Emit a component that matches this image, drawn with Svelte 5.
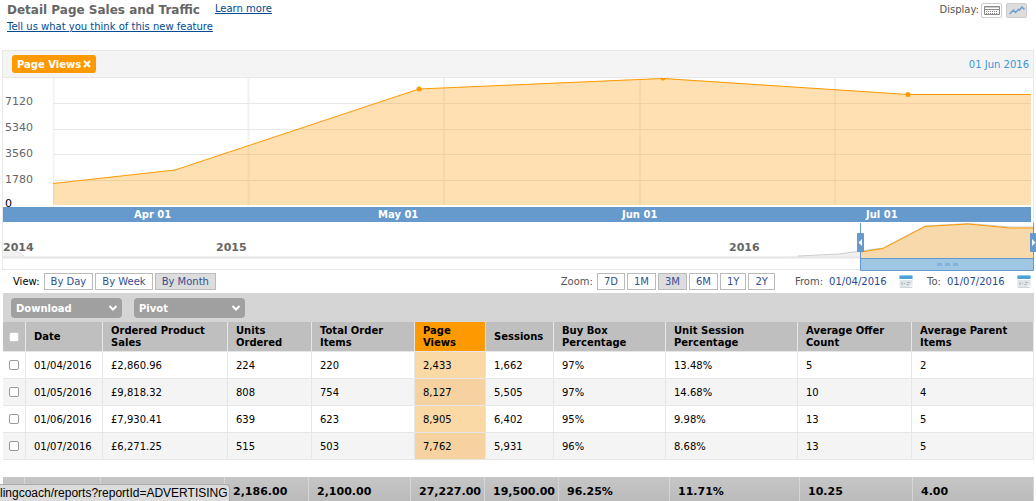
<script>
  const axis = [7120, 5340, 3560, 1780];
  const months = ['Apr 01', 'May 01', 'Jun 01', 'Jul 01'];
  const years = [2014, 2015, 2016];
  const views = ['By Day', 'By Week', 'By Month'];
  const zooms = ['7D', '1M', '3M', '6M', '1Y', '2Y'];

  let view = $state('By Month');
  let zoom = $state('3M');

  const columns = [
    { title: 'Date', width: 77 },
    { title: 'Ordered Product Sales', width: 125 },
    { title: 'Units Ordered', width: 84 },
    { title: 'Total Order Items', width: 103 },
    { title: 'Page Views', width: 71, active: true },
    { title: 'Sessions', width: 68 },
    { title: 'Buy Box Percentage', width: 112 },
    { title: 'Unit Session Percentage', width: 132 },
    { title: 'Average Offer Count', width: 114 },
    { title: 'Average Parent Items', width: 122 }
  ];

  const rows = [
    ['01/04/2016', '£2,860.96', '224', '220', '2,433', '1,662', '97%', '13.48%', '5', '2'],
    ['01/05/2016', '£9,818.32', '808', '754', '8,127', '5,505', '97%', '14.68%', '10', '4'],
    ['01/06/2016', '£7,930.41', '639', '623', '8,905', '6,402', '95%', '9.98%', '13', '5'],
    ['01/07/2016', '£6,271.25', '515', '503', '7,762', '5,931', '96%', '8.68%', '13', '5']
  ];

  const totals = [
    { value: '', width: 22 },
    { value: '', width: 76 },
    { value: '', width: 124 },
    { value: '2,186.00', width: 84 },
    { value: '2,100.00', width: 102 },
    { value: '27,227.00', width: 74 },
    { value: '19,500.00', width: 74 },
    { value: '96.25%', width: 111 },
    { value: '11.71%', width: 130 },
    { value: '10.25', width: 113 },
    { value: '4.00', width: 121 }
  ];
</script>

{#snippet calendar()}
  <svg width="14" height="15" viewBox="0 0 14 15" aria-hidden="true">
    <rect x="0.5" y="1" width="13" height="13" rx="1" fill="#e0e5e8" />
    <path d="M0.5 5V2a1 1 0 0 1 1-1h11a1 1 0 0 1 1 1v3z" fill="#4aa3d4" />
    <path d="M1 1.5h12" stroke="#8cc6e8" />
    <path d="M1 5.5h12" stroke="#fff" />
    <path d="M3 8v3M5 9.5h1M8 8.500h3M7.500 10.500h2" stroke="#a9b4bb" />
    <path d="M9 14l4.500-4v4z" fill="#f7f9fa" />
    <path d="M1 13.500h12" stroke="#cfd5d9" />
  </svg>
{/snippet}

{#snippet dropdown(name)}
  <label class="dropdown">
    <select aria-label={name}><option>{name}</option></select>
    <svg width="10" height="8" viewBox="0 0 10 8" aria-hidden="true">
      <path d="M1.500 2L5 5.500L8.500 2" fill="none" stroke="#fff" stroke-width="2" />
    </svg>
  </label>
{/snippet}

<div class="page">
  <header>
    <div>
      <div class="title">
        <h1>Detail Page Sales and Traffic</h1>
        <a href="#learn">Learn more</a>
      </div>
      <a href="#feedback">Tell us what you think of this new feature</a>
    </div>
    <div class="display">
      <span>Display:</span>
      <button aria-label="Table">
        <svg width="16" height="10" viewBox="0 0 16 10">
          <path d="M0.500 0.500h15v8h-15z" fill="#fff" stroke="#888" />
          <path d="M1 1.500h14" stroke="#ccc" />
          <path d="M1 3.500h14" stroke="#888" />
          <path d="M2 5.500h12M2 7.500h12" stroke="#888" stroke-dasharray="1 1" />
        </svg>
      </button>
      <button class="on" aria-label="Chart">
        <svg width="16" height="10" viewBox="0 0 16 10">
          <path d="M0.500 8L4.500 4L6.500 6.500L9.500 3.500L10.500 4L13 1L15.500 3.500" fill="none" stroke="#6f9fd0" stroke-width="1.500" />
        </svg>
      </button>
    </div>
  </header>

  <section class="panel">
    <div class="legend">
      <button class="chip">Page Views
        <svg width="8" height="8" viewBox="0 0 8 8" aria-hidden="true">
          <path d="M1 1l6 6M7 1l-6 6" stroke="#fff" stroke-width="2" />
        </svg>
      </button>
      <span class="hovered">01 Jun 2016</span>
    </div>

    <div class="chart">
      <div class="axis">
        {#each axis as tick}
          <span>{tick}</span>
        {/each}
        <span class="zero">0</span>
      </div>
      <svg class="plot" viewBox="0 0 978 127" preserveAspectRatio="none">
        <path d="M0.500 0v127M195.500 0v127M391 0v127M587 0v127M782 0v127" stroke="#f2f2f2" stroke-width="2" />
        <path d="M0 25.500h978M0 51.500h978M0 76.500h978M0 102.500h978" stroke="#e8e8e8" />
        <path d="M0 105.500L122 92L366 11L610 0L855 16.500H978V127H0z" fill="#f90" fill-opacity="0.3" />
        <path d="M0 105.500L122 92L366 11L610 0.500L855 16.500H978" fill="none" stroke="#f90" />
        <circle cx="366" cy="11" r="2.500" fill="#f90" />
        <circle cx="610" cy="0" r="2.500" fill="#f90" />
        <circle cx="855" cy="16.500" r="2.500" fill="#f90" />
      </svg>
    </div>

    <div class="months">
      {#each months as month}
        <span>{month}</span>
      {/each}
    </div>

    <div class="overview">
      <svg viewBox="0 0 1030 48" preserveAspectRatio="none">
        <path d="M0 28L14 29L22 35H0z" fill="#f2f2f2" />
        <path d="M14 29L21 34" stroke="#ddd" />
        <path d="M780 35L836 32L858 29V35z" fill="#f0f0f0" />
        <path d="M0 35.500h858" stroke="#e6e6e6" stroke-width="2" />
        <path d="M795 34L836 32L858 29L880 26L922 4L965 1.500L1007 5H1030" fill="none" stroke="#ccc" />
        <path d="M858 30L880 26.500L922 4.500L965 2L1007 6H1031V36H858z" fill="#f8d9ab" />
        <path d="M858 30L880 26.500L922 4.500L965 2L1007 6H1031" fill="none" stroke="#f90" />
        <path d="M857.500 36.500h173v12h-173z" fill="#9fc6e3" stroke="#69c" />
        <path d="M934 42.500h5M942 42.500h5M950 42.500h5" stroke="#7fb2dc" stroke-width="3" />
        <path d="M857.500 1v36M1030.500 1v36" stroke="#69c" />
        <rect x="854" y="11" width="7" height="19" rx="1" fill="#69c" />
        <rect x="1027" y="11" width="7" height="19" rx="1" fill="#69c" />
        <path d="M859 17v7l-3.500-3.500zM1029 17v7l3.500-3.500z" fill="#fff" />
      </svg>
      <div class="years">
        {#each years as year}
          <span>{year}</span>
        {/each}
      </div>
    </div>
  </section>

  <div class="controls">
    <div class="group">
      <span class="dark">View:</span>
      {#each views as v}
        <button class:on={view === v} onclick={() => (view = v)}>{v}</button>
      {/each}
    </div>
    <div class="group right">
      <span>Zoom:</span>
      {#each zooms as z}
        <button class:on={zoom === z} onclick={() => (zoom = z)}>{z}</button>
      {/each}
    </div>
    <div class="dates">
      <label>From: <input type="text" value="01/04/2016" />{@render calendar()}</label>
      <label>To: <input type="text" value="01/07/2016" />{@render calendar()}</label>
    </div>
  </div>

  <div class="toolbar">
    {@render dropdown('Download')}
    {@render dropdown('Pivot')}
  </div>

  <table class="data">
    <colgroup>
      <col style:width="{(23 / 1031) * 100}%" />
      {#each columns as column}
        <col style:width="{(column.width / 1031) * 100}%" />
      {/each}
    </colgroup>
    <thead>
      <tr>
        <th class="check"><input type="checkbox" aria-label="Select all" /></th>
        {#each columns as column}
          <th class:active={column.active}>{column.title}</th>
        {/each}
      </tr>
    </thead>
    <tbody>
      {#each rows as row}
        <tr>
          <td class="check"><input type="checkbox" aria-label={row[0]} /></td>
          {#each row as cell, i}
            <td class:active={columns[i].active}>{cell}</td>
          {/each}
        </tr>
      {/each}
    </tbody>
  </table>

  <table class="totals">
    <colgroup>
      {#each totals as total}
        <col style:width="{(total.width / 1031) * 100}%" />
      {/each}
    </colgroup>
    <tbody>
      <tr>
        {#each totals as total}
          <td>{total.value}</td>
        {/each}
      </tr>
    </tbody>
  </table>

  <div class="status">lingcoach/reports?reportId=ADVERTISING</div>
</div>

<style>
  :global(body) {
    margin: 0;
    background: #fff;
  }

  .page {
    position: relative;
    font-family: Verdana, 'DejaVu Sans', sans-serif;
    font-size: 10px;
    color: #000;
  }

  button,
  input,
  select {
    font: inherit;
    margin: 0;
  }

  svg {
    display: block;
  }

  header {
    display: flex;
    justify-content: space-between;
    height: 50px;
    padding: 0 9px 0 7px;
    box-sizing: border-box;
  }

  header a {
    color: #004b91;
    line-height: 18px;
  }

  .title {
    display: flex;
    gap: 15px;
    height: 18px;
  }

  h1 {
    margin: 0;
    font-size: 12px;
    line-height: 20px;
    color: #666;
  }

  .display {
    display: flex;
    gap: 4px;
    padding-top: 3px;
    height: 15px;
    line-height: 14px;
    color: #555;
  }

  .display span {
    margin-right: -2px;
  }

  .display button {
    display: grid;
    place-items: center;
    width: 21px;
    height: 15px;
    padding: 0;
    background: #fff;
    border: 1px solid #ccc;
    border-radius: 2px;
  }

  .display .on {
    background: #ddd;
  }

  .panel {
    margin: 0 2px;
    border: 1px solid #e8e8e8;
  }

  .legend {
    display: flex;
    justify-content: space-between;
    align-items: center;
    height: 26px;
    padding: 0 4px 0 9px;
    background: #f4f4f4;
    border-bottom: 1px solid #e8e8e8;
  }

  .chip {
    display: flex;
    align-items: center;
    gap: 2px;
    height: 18px;
    padding: 0 5px;
    background: #f90;
    border: 0;
    border-radius: 3px;
    color: #fff;
    font-weight: bold;
  }

  .hovered {
    color: #3c96d4;
  }

  .chart {
    display: flex;
    height: 129px;
    margin-right: 2px;
  }

  .axis {
    display: flex;
    flex-direction: column;
    width: 48px;
    padding: 11px 0 0 2px;
    font-size: 11px;
    line-height: 26px;
    color: #666;
  }

  .axis .zero {
    line-height: 22px;
    color: #000;
  }

  .plot {
    flex: 1;
    min-width: 0;
    height: 127px;
  }

  .months {
    display: grid;
    grid-template-columns: repeat(3, 244fr) 165fr;
    margin-right: 2px;
    padding-left: 131px;
    background: #69c;
    color: #fff;
    font-weight: bold;
    line-height: 15px;
  }

  .overview {
    display: grid;
    height: 47px;
  }

  .overview > * {
    grid-area: 1 / 1;
  }

  .overview svg {
    width: 100%;
    height: 48px;
    overflow: visible;
  }

  .years {
    display: grid;
    grid-template-columns: 213fr 513fr 304fr;
    padding-top: 18px;
    font-size: 11px;
    font-weight: bold;
    line-height: 16px;
    color: #666;
  }

  .controls {
    display: flex;
    align-items: center;
    height: 23px;
    padding: 0 5px 0 13px;
    color: #555;
  }

  .group {
    display: flex;
    align-items: center;
    gap: 2px;
  }

  .group .dark {
    color: #000;
  }

  .group span {
    margin-right: 2px;
  }

  .group button {
    height: 17px;
    padding: 0 6px;
    background: #fff;
    border: 1px solid #bbb;
    color: #34508f;
    line-height: 15px;
  }

  .group .on {
    background: #ddd;
  }

  .right {
    margin-left: auto;
  }

  .dates {
    display: flex;
    gap: 14px;
    margin-left: 20px;
  }

  .dates label {
    display: flex;
    align-items: center;
    gap: 6px;
  }

  .dates input {
    width: 64px;
    padding: 0;
    border: 0;
    background: none;
    color: #1f4a94;
  }

  .toolbar {
    display: flex;
    gap: 12px;
    margin: 0 2px 0 3px;
    padding: 5px 8px 4px;
    background: #d5d5d5;
  }

  .dropdown {
    display: grid;
    align-items: center;
    width: 111px;
    height: 20px;
    background: #a0a0a0;
    border-radius: 4px;
  }

  .dropdown > * {
    grid-area: 1 / 1;
  }

  .dropdown select {
    appearance: none;
    width: 100%;
    height: 20px;
    padding: 0 5px;
    background: none;
    border: 0;
    color: #fff;
    font-weight: bold;
  }

  .dropdown svg {
    justify-self: end;
    margin-right: 4px;
    pointer-events: none;
  }

  table {
    table-layout: fixed;
    border-collapse: separate;
    border-spacing: 0;
  }

  .data {
    width: calc(100% - 5px);
    margin: 0 2px 0 3px;
  }

  th,
  td {
    box-sizing: border-box;
    padding: 0 8px;
    border-right: 1px solid #e6e6e6;
    text-align: left;
  }

  th {
    height: 30px;
    background: #bfbfbf;
    border-bottom: 1px solid #e6e6e6;
    line-height: 12px;
  }

  th.active {
    background: #f90;
  }

  .data td {
    height: 27px;
    border-bottom: 1px solid #e6e6e6;
  }

  tbody tr:nth-child(even) {
    background: #f4f4f4;
  }

  td.active {
    background: #fbd9a5;
  }

  tr:nth-child(even) td.active {
    background: #f5d29f;
  }

  .data .check {
    padding: 0 0 0 6px;
  }

  .check input {
    display: block;
    appearance: none;
    width: 10px;
    height: 10px;
    background: #fff;
    border: 1px solid #999;
    border-radius: 2px;
  }

  th.check input {
    border-color: #ccc;
  }

  .totals {
    width: calc(100% - 5px);
    margin: 17px 2px 0 3px;
    background: linear-gradient(#c6c6c6, #bababa);
  }

  .totals td {
    height: 24px;
    padding-top: 4px;
    border-color: #d6d6d6;
    font-size: 11px;
    font-weight: bold;
  }

  .status {
    position: absolute;
    left: 0;
    bottom: 0;
    padding: 0 1px 0 0;
    background: #dcdcdc;
    border: 1px solid #aaa;
    border-width: 1px 1px 0 0;
    border-radius: 0 4px 0 0;
    font-family: 'Liberation Sans', Arial, sans-serif;
    font-size: 12px;
    line-height: 16px;
  }
</style>
